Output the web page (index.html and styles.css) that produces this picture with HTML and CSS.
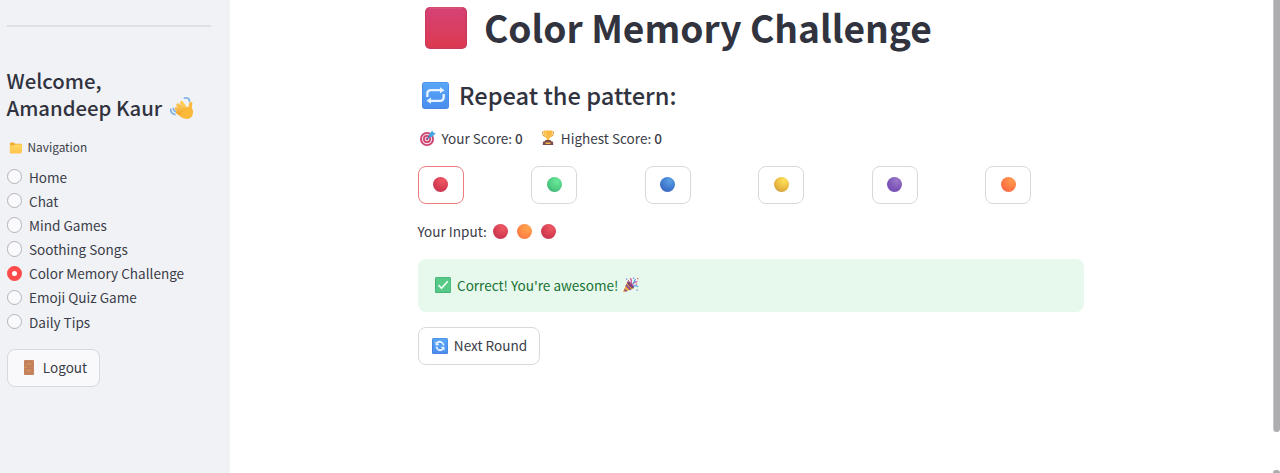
FILE: index.html
```html
<!DOCTYPE html>
<html lang="en">
<head>
<meta charset="utf-8">
<title>Color Memory Challenge</title>
<link rel="stylesheet" href="styles.css">
</head>
<body>
<svg class="defs" width="0" height="0" aria-hidden="true">
  <defs>
    <linearGradient id="square" x1="0" y1="0" x2="0" y2="1"><stop offset="0" stop-color="#d64276"/><stop offset="1" stop-color="#dc3a50"/></linearGradient>
    <linearGradient id="sky" x1="0" y1="0" x2="0" y2="1"><stop offset="0" stop-color="#58a8f6"/><stop offset="1" stop-color="#4b8df0"/></linearGradient>
    <linearGradient id="folder" x1="0" y1="0" x2="0" y2="1"><stop offset="0" stop-color="#ffd865"/><stop offset="1" stop-color="#ffc34b"/></linearGradient>
  </defs>
</svg>
<div class="app">
  <aside class="sidebar">
    <hr class="rule">
    <h2 class="welcome">Welcome,<br>Amandeep Kaur
      <svg class="wave" viewBox="0 0 26 26"><g fill="none" stroke="#85b4e2" stroke-width="1.800" stroke-linecap="round"><path d="M15.500 3.200q4.500-1.200 5 3M1.800 14.500q-.2 4 4 5M4.300 13.500q.2 2.500 2.200 3.200"/></g><g fill="none" stroke-linecap="round" stroke-width="3.200"><path d="m8.500 17.500 5 3.500" stroke="#f4ad33"/><path d="m7.300 13.800 7.500 5.500" stroke="#f8b83e"/><path d="m8.800 10 7.200 7" stroke="#fbc249"/><path d="m12.500 7.500 6 8" stroke="#ffcc51"/><path d="M21.800 8.500q-1.500 4.500.7 8" stroke="#f9ba3e"/></g><path fill="#fbb93b" d="M14 13.500q4-2.500 8.800-.5 2.300 5.500-.1 8.800-3.500 3.600-8.200 1.400-3-1.200-4.300-3.200z"/><path d="m8.700 12.200 5 4.500M11.200 9.500l4.500 5M8.700 16l4.500 3.200" fill="none" stroke="#e79a2c" stroke-width=".7"/></svg>
    </h2>
    <p class="nav-label"><svg class="folder" viewBox="0 0 14 12"><path fill="#f1ad34" d="M1 1.500Q1 .5 2 .5h3l1.200 1.200H12q1 0 1 1V10H1z"/><path fill="url(#folder)" d="M.6 3.600h4.200L6.200 2.500h6.200q1 0 1 1l-.8 7q-.1 1-1 1H1.800q-.8 0-.9-.8z"/></svg>Navigation</p>
    <ul class="nav">
      <li class="item"><span class="radio"></span>Home</li>
      <li class="item"><span class="radio"></span>Chat</li>
      <li class="item"><span class="radio"></span>Mind Games</li>
      <li class="item"><span class="radio"></span>Soothing Songs</li>
      <li class="item"><span class="radio radio-on"></span>Color Memory Challenge</li>
      <li class="item"><span class="radio"></span>Emoji Quiz Game</li>
      <li class="item"><span class="radio"></span>Daily Tips</li>
    </ul>
    <button class="btn logout"><svg class="door" viewBox="0 0 10 15"><rect width="10" height="15" rx=".7" fill="#c6855f"/><path d="M2 2h6v4H2zM2 8.500h6V13H2z" fill="#ce8c61" stroke="#b66f4d" stroke-width=".5"/><circle cx="1.500" cy="7.500" r=".7" fill="#e8b34b"/></svg>Logout</button>
  </aside>
  <main class="main">
    <h1 class="title"><svg class="red-square" viewBox="0 0 42 42"><rect width="42" height="42" rx="5" fill="#c93a5c"/><rect x="1" y="1.500" width="39.500" height="39" rx="4" fill="url(#square)"/><path d="M4 1h34" stroke="#e2648b" stroke-width="1"/></svg><span>Color Memory Challenge</span></h1>
    <h2 class="subtitle"><svg class="repeat" viewBox="0 0 27 27"><rect width="27" height="27" rx="3" fill="#4684df"/><rect x=".8" y=".5" width="25.700" height="25.700" rx="2.500" fill="url(#sky)"/><g fill="none" stroke="#e9f3ff" stroke-width="2.300"><path d="M5.300 15v-3q0-3.800 3.800-3.800H19M21.700 12v3q0 3.800-3.800 3.800H8"/></g><path fill="#e9f3ff" d="m18 5.300 4.500 2.900-4.500 3.100zM9 15.600l-4.500 3.200L9 21.700z"/></svg><span>Repeat the pattern:</span></h2>
    <p class="scores">
      <svg class="target" viewBox="0 0 16 16"><circle cx="7" cy="9" r="7" fill="#cf426f"/><circle cx="7" cy="9" r="5.200" fill="#f3dbe6"/><circle cx="7" cy="9" r="4" fill="#cf426f"/><circle cx="7" cy="9" r="2.300" fill="#f3dbe6"/><circle cx="7" cy="9" r="1.200" fill="#cf426f"/><path d="m7 9 5-5" stroke="#347fb7" stroke-width="1.200"/><path d="m9 4.500 3.300-4 .9 2 2.500.8L12 7l-2.800.1z" fill="#44a5e5"/></svg>
      <span class="score">Your Score: <b>0</b></span>
      <svg class="trophy" viewBox="0 0 14 16"><path d="M3 2H1.500q0 4 2.900 4.500M11 2h1.500q0 4-2.900 4.500" fill="none" stroke="#eaa33b" stroke-width="1.100"/><path d="M2.800.5h8.400q.3 6-2.900 7.800v2.500H5.700V8.300Q2.500 6.500 2.800.5z" fill="#f9b942"/><path d="M4.500 1.500q0 3.500 1.500 5" fill="none" stroke="#ffda73"/><path d="M4.500 10h5l1 1.500h.8q.9 0 .9 1V15H1.800v-2.500q0-1 .9-1h.8z" fill="#7b4b4d"/><path d="M4.500 12.500h5V14h-5z" fill="#f4b649"/></svg>
      <span class="score">Highest Score: <b>0</b></span>
    </p>
    <div class="colors">
      <button class="btn color active"><span class="ball red"></span></button>
      <button class="btn color"><span class="ball green"></span></button>
      <button class="btn color"><span class="ball blue"></span></button>
      <button class="btn color"><span class="ball yellow"></span></button>
      <button class="btn color"><span class="ball purple"></span></button>
      <button class="btn color"><span class="ball orange"></span></button>
    </div>
    <p class="input"><span class="input-label">Your Input:</span><span class="ball red"></span><span class="ball amber"></span><span class="ball red"></span></p>
    <div class="success"><svg class="check" viewBox="0 0 16 16"><rect width="16" height="16" rx="1.500" fill="#42aa71"/><rect x=".8" y=".4" width="14.800" height="14.800" rx="1.200" fill="#55c985"/><path d="m3.500 8 3 3.300 6.300-7" fill="none" stroke="#f0fff5" stroke-width="1.700"/></svg><span>Correct! You're awesome!</span><svg class="party" viewBox="0 0 16 16"><path d="m4.300 4.500 6.500 6.800L1 15.300q-1 .1-.7-1z" fill="#efa83d"/><path d="m3.300 7 5.400 5.400-2 .8-4.200-4.300zM1.500 11.700l3 2.400-1.700.7-1.800-1.500z" fill="#8c5193"/><ellipse cx="7.600" cy="7.800" rx="1.800" ry="4.500" transform="rotate(-43 7.600 7.800)" fill="#7d4576"/><path d="M7.500 7Q9.500 4 7.300 1.200M9 8.500q2-3.800 5.400-3.900" fill="none" stroke="#d956a1" stroke-width="1.300"/><path d="m10 7 2.500-5M10.500 9.500q2-1.800 4.500.3" fill="none" stroke="#58a9e3" stroke-width="1.300"/><path d="M3 1.500h1.200v1.200H3zM10 .5h1.200v1.200H10zM13.500 12.500h1.200v1.200h-1.200z" fill="#7e77d2"/><path d="M14 1h1.300v1.300H14zM12.700 6.500H14v1.300h-1.300zM5 3h1v1H5z" fill="#e85d78"/></svg></div>
    <button class="btn next"><svg class="check" viewBox="0 0 16 16"><rect width="16" height="16" rx="1.500" fill="#467fda"/><rect x=".8" y=".4" width="14.800" height="14.800" rx="1.200" fill="url(#sky)"/><path d="M5 5q3-2.500 5.500 0 1 1 1 2.500M11 11q-3 2.500-5.500 0-1-1-1-2.500" fill="none" stroke="#eaf3ff" stroke-width="1.700"/><path fill="#eaf3ff" d="M3.500 3.300v4h4zM12.500 12.700v-4h-4z"/></svg><span>Next Round</span></button>
  </main>
  <div class="scroll"><span class="thumb"></span><span class="scroll-end"></span></div>
</div>
</body>
</html>
```
FILE: styles.css
```css
* { box-sizing: border-box; }
body { margin: 0; background: #fff; color: #3b3d48; font: 400 13.560px/24px "Noto Sans CJK SC", "Source Sans Pro", sans-serif; overflow: hidden; }
h1, h2, p, ul { margin: 0; padding: 0; }
h1, h2 { color: #31333f; }
svg { display: block; flex: none; }
.defs { position: absolute; }
.app { display: flex; width: 1280px; height: 473px; overflow: hidden; }
.sidebar { width: 230px; flex: none; background: #f0f2f6; padding: 25px 19px 0 6.500px; }
.rule { height: 2px; margin: 0; border: 0; background: #dfe0e6; }
.welcome { font-size: 20.350px; line-height: 27.200px; font-weight: 500; margin-top: 40px; white-space: nowrap; }
.wave { display: inline-block; width: 26px; height: 26px; vertical-align: -5px; margin-left: 2px; }
.nav-label { display: flex; align-items: center; height: 20px; margin-top: 16px; font-size: 11.850px; }
.folder { width: 14px; height: 12px; margin: 1px 5px 0 2px; }
.nav { list-style: none; margin-top: 7px; }
.item { display: flex; align-items: center; height: 24.200px; gap: 7px; white-space: nowrap; }
.radio { width: 15.500px; height: 15.500px; flex: none; border: 1px solid #b2b4bb; border-radius: 50%; background: #fafafd; }
.radio-on { border: 5px solid #ff4b4b; background: #fff; }
.btn { display: flex; align-items: center; justify-content: center; height: 38px; padding: 0; border: 1px solid #d8d9df; border-radius: 8px; background: #fff; color: inherit; font: inherit; }
.logout { width: 93px; margin-top: 15px; background: #f9f9fc; gap: 9px; padding: 0 0 1px 5px; }
.door { width: 10px; height: 15px; }
.main { width: 666.500px; flex: none; margin-left: 187.500px; }
.title { display: flex; align-items: center; height: 56px; font-size: 37.150px; font-weight: 700; white-space: nowrap; gap: 17px; padding-left: 7.500px; }
.title span, .subtitle span, .success span, .next span { padding-bottom: 2px; }
.red-square { width: 42px; height: 42px; }
.subtitle { display: flex; align-items: center; height: 40px; margin-top: 20px; padding-left: 4.500px; gap: 10px; font-size: 23.650px; font-weight: 500; white-space: nowrap; }
.repeat { width: 27px; height: 27px; margin-bottom: 2px; }
.scores { display: flex; align-items: center; height: 24px; margin-top: 10px; padding-left: 2px; white-space: nowrap; }
.score { margin-left: 6px; }
.score b { font-weight: 500; }
.target { width: 16px; height: 16px; }
.trophy { width: 14px; height: 16px; margin-left: 18px; }
.colors { display: grid; grid-template-columns: repeat(6, 113.600px); margin-top: 16px; }
.color { width: 46px; }
.active { border-color: #ef7b7f; }
.ball { width: 15px; height: 15px; border-radius: 50%; flex: none; }
.color .ball { margin-top: -1px; }
.red { background: radial-gradient(circle at 65% 25%, #ef5964, #d63d52 55%, #b93456); }
.green { background: radial-gradient(circle at 65% 30%, #6ae99b, #4dcc82 55%, #399d72); }
.blue { background: radial-gradient(circle at 65% 25%, #5aa0e5, #3e78cc 55%, #3a57b5); }
.yellow { background: radial-gradient(circle at 65% 25%, #ffe15a, #e9b83f 55%, #c18b40); }
.purple { background: radial-gradient(circle at 65% 25%, #9b78c9, #7c55b7 55%, #704ab1); }
.orange { background: radial-gradient(circle at 70% 25%, #ff9a50, #ff7843 55%, #f35c4d); }
.amber { background: radial-gradient(circle at 70% 25%, #ffa54f, #ff8746 55%, #ed7142); }
.input { display: flex; align-items: center; height: 24px; margin-top: 15px; gap: 9px; }
.input-label { margin-right: -3px; white-space: nowrap; }
.success { display: flex; align-items: center; height: 53px; margin-top: 16px; padding-left: 17.500px; gap: 6px; border-radius: 8px; background: #e7f9ed; color: #177233; }
.check { width: 16px; height: 16px; margin-bottom: 1px; }
.party { width: 16px; height: 16px; margin: 0 0 1px -1px; }
.next { width: 122px; margin-top: 15px; gap: 6px; padding-left: 2px; }
.scroll { width: 7px; margin-left: auto; display: flex; flex-direction: column; justify-content: space-between; }
.thumb { height: 432px; background: #adadb0; border-radius: 0 0 4px 4px; border-left: 1px solid #c7c7c9; }
.scroll-end { height: 3px; background: #adadb0; border-radius: 3px 3px 0 0; }
```
